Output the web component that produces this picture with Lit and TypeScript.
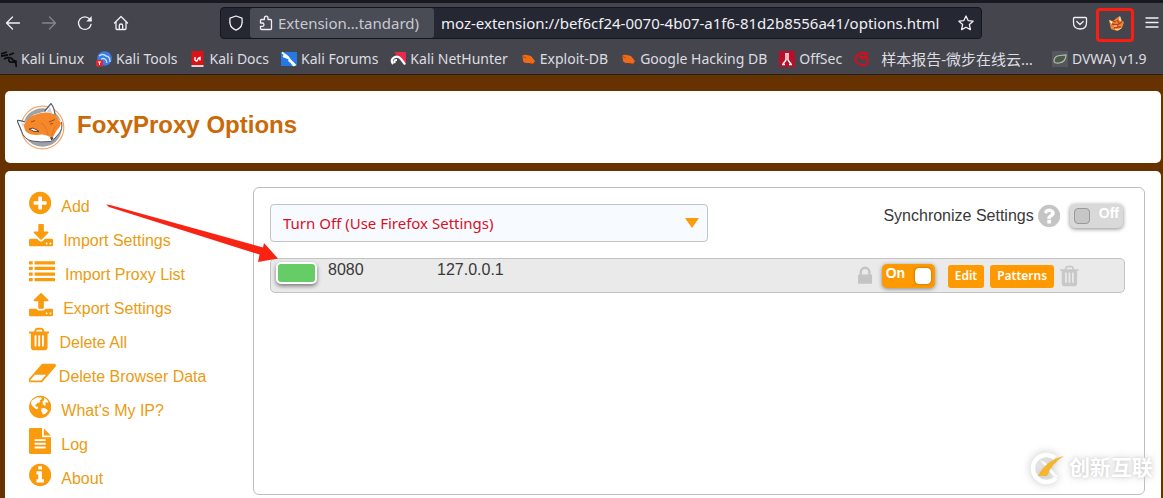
import { LitElement, html, css, svg } from "lit";
import { customElement, property, state } from "lit/decorators.js";

const CIRCLE =
  "M1664 896q0 209-103 385.5t-279.5 279.5-385.5 103-385.5-103-279.5-279.5-103-385.5 103-385.5 279.5-279.5 385.5-103 385.5 103 279.5 279.5 103 385.5z";

interface Glyph {
  x: number;
  w: number;
  d: string;
}

const GLYPHS: Record<string, Glyph> = {
  plus: {
    x: 128, w: 1536,
    d: "M1344 960v-128q0-26-19-45t-45-19h-256v-256q0-26-19-45t-45-19h-128q-26 0-45 19t-19 45v256h-256q-26 0-45 19t-19 45v128q0 26 19 45t45 19h256v256q0 26 19 45t45 19h128q26 0 45-19t19-45v-256h256q26 0 45-19t19-45z" + CIRCLE,
  },
  download: {
    x: 64, w: 1664,
    d: "M1344 1344q0-26-19-45t-45-19-45 19-19 45 19 45 45 19 45-19 19-45zm256 0q0-26-19-45t-45-19-45 19-19 45 19 45 45 19 45-19 19-45zm128-224v320q0 40-28 68t-68 28h-1472q-40 0-68-28t-28-68v-320q0-40 28-68t68-28h465l135 136q58 56 136 56t136-56l136-136h464q40 0 68 28t28 68zm-325-569q17 41-14 70l-448 448q-18 19-45 19t-45-19l-448-448q-31-29-14-70 17-39 59-39h256v-448q0-26 19-45t45-19h256q26 0 45 19t19 45v448h256q42 0 59 39z",
  },
  list: {
    x: 0, w: 1792,
    d: "M0 224h256v224h-256zM384 224h1408v224h-1408zM0 608h256v224h-256zM384 608h1408v224h-1408zM0 992h256v224h-256zM384 992h1408v224h-1408zM0 1376h256v224h-256zM384 1376h1408v224h-1408z",
  },
  upload: {
    x: 64, w: 1664,
    d: "M1344 1472q0-26-19-45t-45-19-45 19-19 45 19 45 45 19 45-19 19-45zm256 0q0-26-19-45t-45-19-45 19-19 45 19 45 45 19 45-19 19-45zm128-224v320q0 40-28 68t-68 28h-1472q-40 0-68-28t-28-68v-320q0-40 28-68t68-28h427q21 56 70.5 92t110.5 36h256q61 0 110.5-36t70.5-92h427q40 0 68 28t28 68zm-325-648q-17 40-59 40h-256v448q0 26-19 45t-45 19h-256q-26 0-45-19t-19-45v-448h-256q-42 0-59-40-17-39 14-69l448-448q18-19 45-19t45 19l448 448q31 30 14 69z",
  },
  trash: {
    x: 192, w: 1408,
    d: "M704 1376v-704q0-14-9-23t-23-9h-64q-14 0-23 9t-9 23v704q0 14 9 23t23 9h64q14 0 23-9t9-23zm256 0v-704q0-14-9-23t-23-9h-64q-14 0-23 9t-9 23v704q0 14 9 23t23 9h64q14 0 23-9t9-23zm256 0v-704q0-14-9-23t-23-9h-64q-14 0-23 9t-9 23v704q0 14 9 23t23 9h64q14 0 23-9t9-23zm-544-992h448l-48-117q-7-9-17-11h-317q-10 2-17 11zm928 32v64q0 14-9 23t-23 9h-96v948q0 83-47 143.5t-113 60.5h-832q-66 0-113-58.5t-47-141.5v-952h-96q-14 0-23-9t-9-23v-64q0-14 9-23t23-9h309l70-167q15-37 54-63t79-26h320q40 0 79 26t54 63l70 167h309q14 0 23 9t9 23z",
  },
  eraser: {
    x: 0, w: 1920,
    d: "M832 1408l336-384h-768l-336 384h768zm1013-1077q15 34 9.5 71.5t-30.5 65.5l-896 1024q-38 44-96 44h-768q-38 0-69.5-20.5t-47.5-54.5q-15-34-9.500-71.5t30.500-65.5l896-1024q38-44 96-44h768q38 0 69.500 20.500t47.500 54.500z",
  },
  globe: {
    x: 128, w: 1536,
    d: CIRCLE + "M560 300q90-70 190-96l70 60 110-40 90 60-60 110-110 20 60 90-90 110-110-20-30 100-130 60 40 110 150 10 20 120-130 60-130-110-150-120-80-170q-10-90 60-200zM1180 250q200 110 290 290l-60 60-110-30-60 90 60 100-90 50-130-110-20-170 110-120zM980 990l190-20 150 70 110 90q-50 130-170 230l-170 60-60-140-60-110z",
  },
  file: {
    x: 128, w: 1536,
    d: "M1596 476q14 14 28 36h-472v-472q22 14 36 28zm-476 164h544v1056q0 40-28 68t-68 28h-1344q-40 0-68-28t-28-68v-1600q0-40 28-68t68-28h800v544q0 40 28 68t68 28zM1280 1376v-64q0-14-9-23t-23-9h-704q-14 0-23 9t-9 23v64q0 14 9 23t23 9h704q14 0 23-9t9-23zm0-256v-64q0-14-9-23t-23-9h-704q-14 0-23 9t-9 23v64q0 14 9 23t23 9h704q14 0 23-9t9-23zM1280 864v-64q0-14-9-23t-23-9h-704q-14 0-23 9t-9 23v64q0 14 9 23t23 9h704q14 0 23-9t9-23z",
  },
  info: {
    x: 128, w: 1536,
    d: "M1152 1376v-160q0-14-9-23t-23-9h-96v-512q0-14-9-23t-23-9h-320q-14 0-23 9t-9 23v160q0 14 9 23t23 9h96v320h-96q-14 0-23 9t-9 23v160q0 14 9 23t23 9h448q14 0 23-9t9-23zm-128-896v-160q0-14-9-23t-23-9h-192q-14 0-23 9t-9 23v160q0 14 9 23t23 9h192q14 0 23-9t9-23z" + CIRCLE,
  },
  question: {
    x: 128, w: 1536,
    d: "M1024 1376v-192q0-14-9-23t-23-9h-192q-14 0-23 9t-9 23v192q0 14 9 23t23 9h192q14 0 23-9t9-23zm256-672q0-88-55.5-163t-138.5-116-170-41q-243 0-371 213-15 24 8 42l132 100q7 6 19 6 16 0 25-12 53-68 86-92 34-24 86-24 48 0 85.500 26t37.500 59q0 38-20 61t-68 45q-63 28-115.500 86.500t-52.500 125.500v36q0 14 9 23t23 9h192q14 0 23-9t9-23q0-19 21.500-49.500t54.500-49.500q32-18 49-28.500t46-35 44.500-48 28-60.500 12.500-81z" + CIRCLE,
  },
  lock: {
    x: 320, w: 1152,
    d: "M640 768h512v-192q0-106-75-181t-181-75-181 75-75 181v192zm832 96v576q0 40-28 68t-68 28h-960q-40 0-68-28t-28-68v-576q0-40 28-68t68-28h32v-192q0-184 132-316t316-132 316 132 132 316v192h32q40 0 68 28t28 68z",
  },
};

@customElement("fp-glyph")
export class FpGlyph extends LitElement {
  @property() name = "plus";

  static styles = css`
    :host { display: inline-flex; height: 26px; }
    .glyph { display: block; height: 100%; width: auto; fill: currentColor; fill-rule: evenodd; }
  `;

  render() {
    const g = GLYPHS[this.name];
    return html`<svg class="glyph" viewBox="${g.x} 0 ${g.w} 1792" aria-hidden="true"><path d=${g.d}></path></svg>`;
  }
}

const LINE_ICONS = {
  back: svg`<path d="M14.500 8H2M7.500 2L1.500 8l6 6"/>`,
  forward: svg`<path d="M1.500 8H14M8.500 2l6 6-6 6"/>`,
  reload: svg`<path d="M14 9.500A6.300 6.300 0 1 1 12.800 4.200L14 5.500"/><path d="M14.700 1v5.500H9.300z" fill="currentColor" stroke="none"/>`,
  home: svg`<path d="M1.500 8L8 1.500 14.500 8M3 7v6.500q0 1 1 1h8q1 0 1-1V7M6.300 14.500V10.500q0-1.500 1.700-1.500t1.700 1.500v4"/>`,
  shield: svg`<path d="M8 1l6 2.200q.8 7-2.200 9.600Q10 14.500 8 15.200 6 14.500 4.200 12.800 1.200 10.200 2 3.200z"/>`,
  puzzle: svg`<path d="M3.500 14.500h9q1 0 1-1v-8q0-1-1-1H10V3.300Q10 1.200 8.200 1.200T6.400 3.300v1.200H3.500q-1 0-1 1V8H4.200q1.800 0 1.800 1.700T4.200 11.400H2.500v2.100q0 1 1 1z"/>`,
  star: svg`<path d="M8 1l2.100 4.600 5 .6-3.700 3.400 1 5L8 12.200l-4.400 2.400 1-5L.9 6.200l5-.6z"/>`,
  pocket: svg`<path d="M1.500 3.500q0-1 1-1h11q1 0 1 1V7.500Q14.500 14 8 14T1.500 7.500zM4.800 6.500L8 9.500l3.200-3"/>`,
  menu: svg`<path d="M2 3h12M2 7.500h12M2 12h12"/>`,
};

const lineIcon = (name: keyof typeof LINE_ICONS) => html`
  <svg class="line-icon" viewBox="0 0 16 16" aria-hidden="true">${LINE_ICONS[name]}</svg>
`;

const hunter = svg`<path d="M1 1.500l6 4.500 2 3 5.500 5.500M2 5l5 2M9 8q-2 2 1 3l3 4" fill="none" stroke="#fff" stroke-width="2"/>`;
const bug = svg`<path d="M2 5q2-2 5-1l4 1 4 5-2 3-4-1-3 0Q2 11 3 8z" fill="#ee6a16"/><path d="M2 5l4 2M10 12l3 1" stroke="#b8460b"/>`;

const BOOKMARKS = [
  { label: "Kali Linux", icon: svg`<path d="M0 3l6-2M0 5l7-1M3 8q7-3 9 1l4 2M8 4l5-2M8 8q-1 4 5 3 3 1 2 5" fill="none" stroke="#0c0d10" stroke-width="1.800"/>` },
  { label: "Kali Tools", icon: svg`<circle cx="8.500" cy="7.500" r="7.300" fill="#3b7ce4"/><path d="M3 5q4-3 7 0 4 0 4 6M5 8q5-2 6 4" fill="none" stroke="#cfe0fb" stroke-width="1.300"/><rect x="0" y="9" width="7" height="6.500" rx="1" fill="#e3262e"/><path d="M2 11h3M3.500 11v3" stroke="#fff"/>` },
  { label: "Kali Docs", icon: svg`<rect x="1.500" y="0" width="12" height="14" fill="#dd1118"/><rect x="1.500" y="14" width="12" height="2" fill="#e8d3d3"/><path d="M5 6v3q2 2 2.500 0T10 6.500v3" fill="none" stroke="#fff" stroke-width="1.400"/>` },
  { label: "Kali Forums", icon: svg`<rect x="0" y="1" width="16" height="14" fill="#2579e4"/>${hunter}` },
  { label: "Kali NetHunter", icon: svg`<path d="M4 1h12v13z" fill="#e62c4d"/><path d="M3 13Q0 9 4 6.500t7 1.500 4 5.500M5 12q-2-3 2-3" fill="none" stroke="#fff" stroke-width="2.200"/>` },
  { label: "Exploit-DB", icon: bug },
  { label: "Google Hacking DB", icon: bug },
  { label: "OffSec", icon: svg`<rect width="16" height="16" fill="#b8102a"/><path d="M6 3h4M7 4v5l-3 4M9 4v5l3 4M3 13.500h3M10 13.500h3" fill="none" stroke="#fff" stroke-width="1.400"/>` },
  { label: "样本报告-微步在线云…", cjk: true, icon: svg`<path d="M14 3Q6 0 2.500 5T5 13t8-1 0-5-6 1M5 6l9-1" fill="none" stroke="#cf1020" stroke-width="2"/>` },
  { label: "DVWA) v1.9", icon: svg`<rect width="16" height="16" fill="#54575b"/><path d="M2 10Q2 5 8 4.500t6-.5q0 7-7 8-5 .5-5-2z" fill="#4b5b46" stroke="#b5bdb0" stroke-width="1.200"/>` },
];

const MENU = [
  { icon: "plus", label: "Add" },
  { icon: "download", label: "Import Settings" },
  { icon: "list", label: "Import Proxy List" },
  { icon: "upload", label: "Export Settings" },
  { icon: "trash", label: "Delete All" },
  { icon: "eraser", label: "Delete Browser Data", tight: true },
  { icon: "globe", label: "What's My IP?" },
  { icon: "file", label: "Log" },
  { icon: "info", label: "About" },
];

const foxFace = svg`
  <path d="M0 17.500Q3 17 8 19L17 11.500 27.500 8.500 34 .500Q37.500 5 38 12L44.500 19Q45.500 26 42 30.500L35 38.500Q24 39.500 15 38 7 36.500 4.500 28z" fill="#fff"/>
  <path d="M4.500 28L0 17.500Q3 17 8 19M27.500 8.500L34 .500Q37.500 5 38 12" fill="none" stroke="#555b66" stroke-width="1.200"/>
  <path d="M4 20l2 4 2-3zM33 4l-3 5 5 1z" fill="#cfd2d8"/>
  <path d="M4.500 28Q7 36.500 15 38T34.500 38.500M44.500 19Q46 26 42 30.500L35 38.500" fill="none" stroke="#555b66" stroke-width="1"/>
  <path d="M7 22Q10 15 17 12T30 9.500Q37 10 40 13.500L44 20Q43 25 40 27L35 35.500Q31 32 25 31.500 14 33 9.500 29 7 27 7 22z" fill="#f5882a"/>
  <path d="M24 20q5 2 7 12M40 22q-4 3-5 11" fill="none" stroke="#dc701f" stroke-width=".8"/>
  <path d="M12 26q4-2 7 .5l3 2q-5 1-10-2.500z" fill="#fff" stroke="#4a3524" stroke-width=".9"/>
  <path d="M32 19l6-2.500M33 21l3-.5M14 19l4-1.500" fill="none" stroke="#a34a12" stroke-width="1"/>
  <path d="M33 34.500l2.500-.5 1 1.500-2 2.500z" fill="#474b55"/>
`;

@customElement("app-root")
export class AppRoot extends LitElement {
  @state() private sync = false;
  @state() private enabled = true;

  static styles = css`
    :host {
      display: flex;
      flex-direction: column;
      position: relative;
      min-height: 100vh;
      overflow: hidden;
      box-sizing: border-box;
      background: #663300;
      color: #383838;
      font: 16px/20px "Liberation Sans", Arial, sans-serif;
    }
    * { box-sizing: border-box; }
    button, input, select { font: inherit; color: inherit; margin: 0; }
    button { border: 0; padding: 0; background: none; cursor: pointer; }
    a { color: inherit; text-decoration: none; }

    .browser {
      background: #45464d;
      border-top: 3px solid #191a21;
      border-bottom: 1px solid #202127;
      color: #f0f0f4;
      font-family: "Noto Sans", "Noto Sans CJK SC", sans-serif;
    }
    .toolbar { display: flex; padding: 4px 0; overflow: hidden; }
    .tools { display: flex; flex: none; }
    .tools-left { margin-left: -5px; }
    .tools-right { margin-right: -7px; }
    .tool { display: grid; place-items: center; width: 36px; height: 32px; }
    .tool[disabled] { color: #85868c; }
    .line-icon {
      width: 16px; height: 16px; flex: none;
      fill: none; stroke: currentColor; stroke-width: 1.3;
      stroke-linecap: round; stroke-linejoin: round;
    }
    .marked { position: relative; }
    .marked::after {
      content: ""; position: absolute; inset: 1px 0 -3px -2px;
      border: 3px solid #fb1d12; border-radius: 4px;
    }
    .mini-fox { width: 16px; height: 16px; }

    .address {
      display: flex; flex: 1; min-width: 0; margin: 0 80px 0 81px; height: 32px;
      background: #252733; border: 1px solid #15161c; border-radius: 4px;
      font-size: 15px;
    }
    .shield { display: grid; place-items: center; width: 29px; }
    .identity {
      display: flex; align-items: center; gap: 4px; width: 184px; padding: 0 8px;
      background: #494b55; color: #c9cad0; border-radius: 3px; white-space: nowrap;
    }
    .identity .line-icon { color: #f0f0f4; }
    .url { flex: 1; min-width: 0; border: 0; padding: 0 7px; background: none; outline: 0; }
    .star { display: grid; place-items: center; width: 30px; }

    .bookmarks {
      display: flex; align-items: center; gap: 12px; height: 31px; padding-left: 1px;
      font-size: 14px; white-space: nowrap; overflow: hidden;
    }
    .bookmark { display: flex; align-items: center; gap: 4px; flex: none; color: #dcdde1; }
    .bookmark-icon { width: 16px; height: 16px; flex: none; }
    .cjk { padding: 0 7px; font-size: 15px; }

    .card { background: #fff; margin: 0 2px 0 5px; }
    .header {
      display: flex; align-items: center; gap: 12px;
      margin-top: 16px; height: 72px; padding: 0 12px; border-radius: 5px;
    }
    .logo { width: 48px; height: 48px; flex: none; }
    .title { margin: 0; color: #c96a08; font-size: 24px; line-height: 30px; padding-bottom: 4px; }

    .content {
      display: flex; flex: 1; margin-top: 8px; padding: 16px 16px 3px 24px;
      border-radius: 5px 5px 0 0;
    }
    .menu { list-style: none; margin: 3px 0 -1px; padding: 0; width: 224px; flex: none; }
    .menu-link { display: flex; gap: 10px; height: 34px; line-height: 34px; color: #eb9c12; }
    .menu-link fp-glyph { flex: none; color: #f99b0c; }
    .tight { gap: 2px; }

    .panel {
      flex: 1; min-width: 0; padding: 16px 19px 16px 16px;
      border: 1px solid #bdbdbd; border-radius: 6px;
    }
    .mode-row { display: flex; justify-content: space-between; align-items: flex-start; gap: 16px; }
    .mode { position: relative; flex: 0 1 438px; }
    .mode-select {
      appearance: none; width: 100%; height: 38px; padding: 0 36px 0 12px;
      background: #f7faff; border: 1px solid #c3c3c3; border-radius: 4px;
      color: #d9101f; font-family: "Noto Sans", sans-serif; font-size: 15px;
    }
    .caret {
      position: absolute; right: 9px; top: 14px; width: 14px; height: 10px;
      fill: #f99b0c; pointer-events: none;
    }
    .sync { display: flex; align-items: center; gap: 4px; padding-right: 2px; height: 24px; }
    .sync fp-glyph { color: #c4c4c4; margin-right: 6px; }

    .switch {
      display: flex; justify-content: space-between; align-items: flex-start;
      position: relative; width: 53px; height: 24px; padding: 4px; border-radius: 5px;
      background: #d9d9d9; box-shadow: 0 1px 4px #888; cursor: pointer;
      color: #fff; font: bold 14px/16px "Liberation Sans", Arial, sans-serif;
    }
    .switch.on { flex-direction: row-reverse; background: #f90; }
    .switch-input { appearance: none; position: absolute; inset: 0; margin: 0; cursor: pointer; }
    .knob { width: 16px; height: 16px; border-radius: 4px; background: #c6c6c6; border: 1px solid #999; }
    .on .knob { background: #fff; border-color: #fff; box-shadow: 0 0 3px #a60; }
    .state { margin-top: -3px; }

    .proxy {
      display: flex; align-items: flex-start; height: 35px; margin-top: 16px; padding: 3px 45px 0 5px;
      background: #eaeaea; border: 1px solid #c3c3c3; border-radius: 5px;
    }
    .swatch {
      width: 41px; height: 22px; flex: none; background: #6c6; border: 2px solid #fff;
      border-radius: 5px; box-shadow: 0 2px 4px #777;
    }
    .port { margin-left: 11px; width: 109px; line-height: 16px; }
    .host { flex: 1; line-height: 16px; }
    .actions { display: flex; align-items: center; gap: 6px; height: 28px; }
    .actions fp-glyph { color: #c8c8c8; height: 24px; }
    .actions .lock { height: 22px; margin-right: 4px; color: #c4c4c4; }
    .actions .switch { margin-right: 7px; }
    .action {
      height: 23px; padding: 0 7px; border-radius: 3px; background: #f90; color: #fff;
      font: 600 12px/22px "Noto Sans", sans-serif;
    }

    .pointer { position: absolute; left: 106px; top: 204px; width: 173px; height: 60px; fill: #f92314; pointer-events: none; }
    .watermark {
      position: absolute; right: 10px; bottom: 10px; display: flex; align-items: center; gap: 5px;
      color: #fff; font: bold 21px/36px "Noto Sans CJK SC", sans-serif;
      text-shadow: 0 0 8px #ccc, 0 0 3px #d4d4d4; pointer-events: none;
    }
    .watermark-logo { width: 36px; height: 36px; overflow: visible; filter: drop-shadow(0 0 4px #bbb); }
    .watermark-name { padding-bottom: 4px; }
  `;

  private toggle(on: boolean, label: string, change: (v: boolean) => void) {
    return html`
      <label class="switch ${on ? "on" : ""}">
        <input class="switch-input" type="checkbox" aria-label=${label} .checked=${on}
          @change=${(e: Event) => change((e.target as HTMLInputElement).checked)} />
        <span class="knob"></span>
        <span class="state">${on ? "On" : "Off"}</span>
      </label>
    `;
  }

  render() {
    return html`
      <header class="browser">
        <div class="toolbar">
          <div class="tools tools-left">
            <button class="tool" aria-label="Back">${lineIcon("back")}</button>
            <button class="tool" aria-label="Forward" disabled>${lineIcon("forward")}</button>
            <button class="tool" aria-label="Reload">${lineIcon("reload")}</button>
            <button class="tool" aria-label="Home">${lineIcon("home")}</button>
          </div>
          <div class="address">
            <button class="shield" aria-label="Tracking protection">${lineIcon("shield")}</button>
            <button class="identity">${lineIcon("puzzle")}<span>Extension…tandard)</span></button>
            <input class="url" type="text" aria-label="Address"
              value="moz-extension://bef6cf24-0070-4b07-a1f6-81d2b8556a41/options.html" />
            <button class="star" aria-label="Bookmark this page">${lineIcon("star")}</button>
          </div>
          <div class="tools tools-right">
            <button class="tool" aria-label="Pocket">${lineIcon("pocket")}</button>
            <button class="tool marked" aria-label="FoxyProxy">
              <svg class="mini-fox" viewBox="0 0 16 16" aria-hidden="true">
                <path d="M1 5l4 1 5-4 2-1 2 5 2 1-2 6-5 3-6-2z" fill="#e8893a"/>
                <path d="M1 5l2.500 4 1-2zM12 1l-1 4 2 1z" fill="#fff"/>
                <path d="M4 9l5 1 5-3M6 13l4-1 3 0M9 5l2 3M5 6l3 1" fill="none" stroke="#c4351a" stroke-width="1.300"/>
                <path d="M7 14l3 1 3-2M6 11l3 0" fill="none" stroke="#ffe3a8"/>
              </svg>
            </button>
            <button class="tool" aria-label="Menu">${lineIcon("menu")}</button>
          </div>
        </div>
        <nav class="bookmarks" aria-label="Bookmarks">
          ${BOOKMARKS.map(
            (b) => html`
              <a class="bookmark" href="#">
                <svg class="bookmark-icon" viewBox="0 0 16 16" aria-hidden="true">${b.icon}</svg>
                <span class=${b.cjk ? "cjk" : ""}>${b.label}</span>
              </a>
            `
          )}
        </nav>
      </header>

      <div class="card header">
        <svg class="logo" viewBox="0 0 48 48" aria-hidden="true">
          <circle cx="25.500" cy="24.500" r="21.300" fill="#fff" stroke="#f3a86a" stroke-width="1.200"/>
          <circle cx="25.500" cy="24.500" r="19.300" fill="#9ea2a8"/>
          ${foxFace}
        </svg>
        <h1 class="title">FoxyProxy Options</h1>
      </div>

      <main class="card content">
        <ul class="menu">
          ${MENU.map(
            (m) => html`
              <li>
                <a class="menu-link ${m.tight ? "tight" : ""}" href="#">
                  <fp-glyph name=${m.icon}></fp-glyph><span>${m.label}</span>
                </a>
              </li>
            `
          )}
        </ul>
        <section class="panel">
          <div class="mode-row">
            <div class="mode">
              <select class="mode-select" aria-label="Proxy mode">
                <option>Turn Off (Use Firefox Settings)</option>
              </select>
              <svg class="caret" viewBox="0 0 14 10" aria-hidden="true"><path d="M0 0h14L7 10z"/></svg>
            </div>
            <div class="sync">
              <span>Synchronize Settings</span>
              <fp-glyph name="question"></fp-glyph>
              ${this.toggle(this.sync, "Synchronize Settings", (v) => (this.sync = v))}
            </div>
          </div>
          <div class="proxy">
            <span class="swatch"></span>
            <span class="port">8080</span>
            <span class="host">127.0.0.1</span>
            <div class="actions">
              <fp-glyph class="lock" name="lock"></fp-glyph>
              ${this.toggle(this.enabled, "Enable proxy", (v) => (this.enabled = v))}
              <button class="action">Edit</button>
              <button class="action">Patterns</button>
              <fp-glyph name="trash"></fp-glyph>
            </div>
          </div>
        </section>
      </main>

      <svg class="pointer" viewBox="0 0 173 60" aria-hidden="true">
        <path d="M0 .500L4 1 157 43.500 158 39 172 54.500 152 58 153.500 50.500 3 3z"/>
      </svg>
      <div class="watermark">
        <svg class="watermark-logo" viewBox="0 0 36 36" aria-hidden="true">
          <path d="M27 8A13.500 13.500 0 1 0 28 28" fill="none" stroke="#fff" stroke-width="4.500"/>
          <path d="M12 10l6 3 13 15-6-2z" fill="#fff"/>
          <path d="M10 26Q18 10 36 6 24 13 19 26z" fill="#f5b52e"/>
        </svg>
        <span class="watermark-name">创新互联</span>
      </div>
    `;
  }
}
